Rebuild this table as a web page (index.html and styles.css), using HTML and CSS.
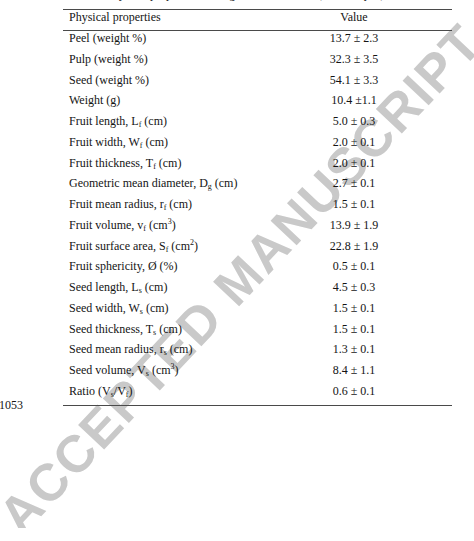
FILE: index.html
```html
<!DOCTYPE html>
<html>
<head>
<meta charset="utf-8">
<link rel="stylesheet" href="styles.css">
</head>
<body>
<div class="page">
  <div class="watermark">ACCEPTED MANUSCRIPT</div>
  <p class="caption"><b>Table 1.</b> Physical properties of longan fruit and seed (Dimocarpus)</p>
  <div class="layout">
    <div class="lineno">1053</div>
    <div class="props">
      <div class="cell head">Physical properties</div><div class="cell head val">Value</div>
      <div class="cell">Peel (weight %)</div><div class="cell val">13.7 ± 2.3</div>
      <div class="cell">Pulp (weight %)</div><div class="cell val">32.3 ± 3.5</div>
      <div class="cell">Seed (weight %)</div><div class="cell val">54.1 ± 3.3</div>
      <div class="cell">Weight (g)</div><div class="cell val">10.4 ±1.1</div>
      <div class="cell">Fruit length, L<sub>f</sub> (cm)</div><div class="cell val">5.0 ± 0.3</div>
      <div class="cell">Fruit width, W<sub>f</sub> (cm)</div><div class="cell val">2.0 ± 0.1</div>
      <div class="cell">Fruit thickness, T<sub>f</sub> (cm)</div><div class="cell val">2.0 ± 0.1</div>
      <div class="cell">Geometric mean diameter, D<sub>g</sub> (cm)</div><div class="cell val">2.7 ± 0.1</div>
      <div class="cell">Fruit mean radius, r<sub>f</sub> (cm)</div><div class="cell val">1.5 ± 0.1</div>
      <div class="cell">Fruit volume, v<sub>f</sub> (cm<sup>3</sup>)</div><div class="cell val">13.9 ± 1.9</div>
      <div class="cell">Fruit surface area, S<sub>f</sub> (cm<sup>2</sup>)</div><div class="cell val">22.8 ± 1.9</div>
      <div class="cell">Fruit sphericity, Ø (%)</div><div class="cell val">0.5 ± 0.1</div>
      <div class="cell">Seed length, L<sub>s</sub> (cm)</div><div class="cell val">4.5 ± 0.3</div>
      <div class="cell">Seed width, W<sub>s</sub> (cm)</div><div class="cell val">1.5 ± 0.1</div>
      <div class="cell">Seed thickness, T<sub>s</sub> (cm)</div><div class="cell val">1.5 ± 0.1</div>
      <div class="cell">Seed mean radius, r<sub>s</sub> (cm)</div><div class="cell val">1.3 ± 0.1</div>
      <div class="cell">Seed volume, V<sub>s</sub> (cm<sup>3</sup>)</div><div class="cell val">8.4 ± 1.1</div>
      <div class="cell">Ratio (V<sub>s</sub>/V<sub>f</sub>)</div><div class="cell val">0.6 ± 0.1</div>
    </div>
  </div>
</div>
</body>
</html>
```
FILE: styles.css
```css
html {
  margin: 0;
  padding: 0;
  background: #ffffff;
}
body {
  margin: 0;
  padding: 0;
  font-family: "Liberation Serif", "Times New Roman", serif;
  font-size: 12px;
  color: #141414;
  overflow: hidden;
}
.page {
  position: relative;
  width: 474px;
  height: 541px;
}
.caption {
  margin: -13px 0 8px 63px;
  line-height: 14px;
  white-space: nowrap;
}
.layout {
  display: grid;
  grid-template-columns: 63px 389px;
}
.lineno {
  align-self: end;
  line-height: 14px;
  margin: 0 0 -6px -1px;
}
.props {
  display: grid;
  grid-template-columns: 193px 196px;
  grid-template-rows: 21px;
  grid-auto-rows: 20.76px;
  border-top: 1px solid #4a4a4a;
  border-bottom: 1px solid #4a4a4a;
}
.cell {
  line-height: 14px;
  padding: 0 0 0 6px;
  white-space: nowrap;
}
.head {
  border-bottom: 1px solid #4a4a4a;
}
.val {
  text-align: center;
  padding: 0;
}
sub {
  font-size: 8px;
  vertical-align: -2px;
  line-height: 0;
}
sup {
  font-size: 8px;
  vertical-align: 5px;
  line-height: 0;
}
.watermark {
  position: absolute;
  left: 240px;
  top: 292px;
  z-index: -1;
  transform: translate(-50%, -50%) rotate(-46.7deg);
  font-family: "Liberation Sans", Arial, sans-serif;
  font-weight: bold;
  font-size: 52px;
  line-height: 1;
  letter-spacing: 1.5px;
  white-space: nowrap;
  color: #c9c9c9;
}
```
